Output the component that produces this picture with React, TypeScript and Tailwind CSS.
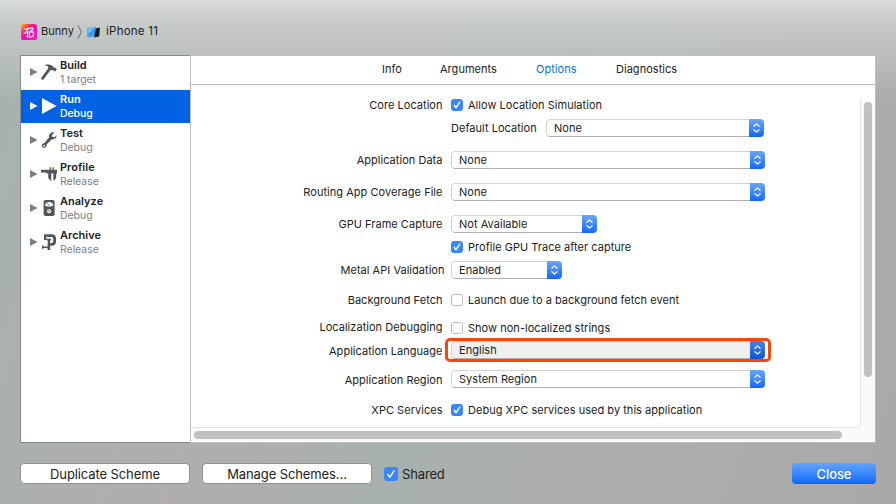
import React from "react";

const FONT = "font-[Inter,'Liberation_Sans',sans-serif]";

function Check({ on, large }: { on: boolean; large?: boolean }) {
  const size = large ? "size-[14px]" : "size-[12px]";
  return on ? (
    <span className={`${size} shrink-0 rounded-[3px] bg-[#3a86fb]`}>
      <svg viewBox="0 0 12 12" className="block size-full" fill="none" stroke="#fff" strokeWidth={large ? 1.2 : 1.5} strokeLinecap="round" strokeLinejoin="round">
        <path d="M3.3 6.4 5.1 8.7 8.7 3.2" />
      </svg>
    </span>
  ) : (
    <span className={`${size} shrink-0 rounded-[3px] border border-[#b9b9b9] bg-white`} />
  );
}

function Select({ value, width, active }: { value: string; width: string; active?: boolean }) {
  return (
    <div className={`flex h-[18px] ${width} shrink-0 overflow-hidden rounded-[4px]`}>
      <div className={`flex flex-1 items-center rounded-l-[4px] border border-r-0 border-[#d2d2d2] border-b-[#b0b0b0] pl-[7px] ${active ? "bg-[#efefef]" : "bg-white"}`}>
        {value}
      </div>
      <div className={`w-[15px] bg-linear-to-b ${active ? "from-[#3f84ee] to-[#0455d8]" : "from-[#68a6fc] to-[#0a66fc]"}`}>
        <svg viewBox="0 0 15 18" className="block h-[18px] w-[15px]" fill="none" stroke="#fff" strokeWidth="1.2" strokeLinecap="round" strokeLinejoin="round">
          <path d="M4.9 7.3 7.5 4.9 10.1 7.3M4.9 10.7 7.5 13.1 10.1 10.7" />
        </svg>
      </div>
    </div>
  );
}

function Row({ label, gap, shift = "", children }: { label: string; gap: string; shift?: string; children: React.ReactNode }) {
  return (
    <div className={`flex h-[18px] items-center ${gap}`}>
      <div className="mr-[8.5px] flex w-[251.5px] shrink-0 justify-end">
        <span className={shift}>{label}</span>
      </div>
      {children}
    </div>
  );
}

function Option({ on, text }: { on: boolean; text: string }) {
  return (
    <div className="flex items-center gap-[5px]">
      <Check on={on} />
      <span>{text}</span>
    </div>
  );
}

const hammer = (
  <svg viewBox="0 0 16 16" className="size-4" fill="none" stroke="#555">
    <path d="M1.6 14.4 8.8 4.6" strokeWidth="2.7" strokeLinecap="round" />
    <path d="M4.2.8C7 0 9.8.4 12 2.2L13.4 4 14.4 3.8 15.8 5.2 14.2 7.6 12.6 6.8 12.2 5.8 10.4 6.4 7.4 4.2C7.6 2.6 6.4 1.6 4.2 1.6Z" fill="#555" stroke="none" />
  </svg>
);
const play = (
  <svg viewBox="0 0 16 16" className="size-4" fill="#fff">
    <path d="M1 0 15.6 8 1 16Z" />
  </svg>
);
const wrench = (
  <svg viewBox="0 0 16 16" className="size-4" fill="#555">
    <path d="M13.4.4 10.9 3.1 11.4 5 13.4 5.3 15.5 3.2C15.9 6 13.8 7.9 10.6 7.4L5.6 12.6C6 14.4 4.6 15.8 3 15.8 1.2 15.8.3 14.2 1 12.8 1.4 11.8 2.4 11.2 3.4 11L8 5.6C7.4 2.6 9.8-.2 13.4.4ZM3.1 13a.8.8 0 1 0 .01 0Z" fillRule="evenodd" />
  </svg>
);
const caliper = (
  <svg viewBox="0 0 16 16" className="size-4" fill="#555">
    <path d="M0 3.8H8.6V.6L9.9 1.8V3.8H11.4V1.8L12.7.6V3.8H16V7.4H15.2V11.6L13.4 14.4H12.4V7.6H10.2V14.4H9L7.2 11.6V7.4H5.6L5 6.6H0Z" />
  </svg>
);
const meter = (
  <svg viewBox="0 0 16 16" className="size-4">
    <rect x="2.6" y="0" width="11" height="16" rx="1.8" fill="#555" />
    <path d="M3.8 5.6C4.6 2.8 6.2 2 8.1 2S11.6 2.8 12.4 5.6L9.6 6.4H6.6Z" fill="#fff" />
    <path d="M8 5.8 6.5 3.4" stroke="#555" strokeWidth=".8" />
    <circle cx="8.1" cy="11.2" r="2" fill="#fff" />
    <path d="M7.2 10.4 9 12" stroke="#555" strokeWidth=".8" />
  </svg>
);
const clamp = (
  <svg viewBox="0 0 16 16" className="size-4" fill="none" stroke="#555">
    <path d="M5.4 1.6H10.4Q13.6 1.6 13.6 4.6V7.4Q13.6 10.4 10.4 10.4H9.2" strokeWidth="2.8" />
    <path d="M3 .2H5.4V6H3ZM6.6 8.4H9.2V16H6.6ZM5.6 4.8H10V6.4H9V9H6.8V6.4H5.6Z" fill="#555" stroke="none" />
    <path d="M1 13.2H7M1.7 11.6V14.8" strokeWidth="1.5" />
  </svg>
);

const schemes = [
  { name: "Build", sub: "1 target", icon: hammer },
  { name: "Run", sub: "Debug", icon: play, selected: true },
  { name: "Test", sub: "Debug", icon: wrench },
  { name: "Profile", sub: "Release", icon: caliper },
  { name: "Analyze", sub: "Debug", icon: meter },
  { name: "Archive", sub: "Release", icon: clamp },
];

function Sidebar() {
  return (
    <div className="w-[170px] shrink-0 border border-r-0 border-[#858a8a] bg-white">
      {schemes.map((s) => (
        <div key={s.name} className={`flex h-[34px] items-start ${s.selected ? "bg-[#0162e3] bg-clip-content pb-px text-white" : "text-[#222]"}`}>
          <svg viewBox="0 0 8 8" className="mt-[12px] ml-[9px] size-[8px] shrink-0" fill={s.selected ? "#fff" : "#7d7d7d"}>
            <path d="M0 0 7.6 4 0 8Z" />
          </svg>
          <div className="mt-[8px] ml-[3px] shrink-0">{s.icon}</div>
          <div className="ml-[3px] pt-[2px]">
            <div className="text-[11px] leading-[14px] font-semibold tracking-[0.02px]">{s.name}</div>
            <div className={`pt-px text-[10.5px] leading-[14px] ${s.selected ? "font-medium tracking-[-0.1px]" : "tracking-[-0.05px] text-[#808080]"}`}>{s.sub}</div>
          </div>
        </div>
      ))}
    </div>
  );
}

function Tabs() {
  return (
    <div className="flex h-[29px] items-center border-b border-[#bdbdbd] pb-[2px] pl-[191px]">
      <span className="w-[58px]">Info</span>
      <span className="w-[96px]">Arguments</span>
      <span className="w-[80px] text-[#0a6fde]">Options</span>
      <span>Diagnostics</span>
    </div>
  );
}

function Form() {
  return (
    <div className="flex min-w-0 flex-1 flex-col">
      <Row label="Core Location" gap="mt-[11px]"><Option on text="Allow Location Simulation" /></Row>
      <Row label="" gap="mt-[5px]">
        <span className="w-[95px] shrink-0">Default Location</span>
        <Select value="None" width="w-[218px]" />
      </Row>
      <Row label="Application Data" gap="mt-[14px]"><Select value="None" width="w-[314px]" /></Row>
      <Row label="Routing App Coverage File" gap="mt-[14px]"><Select value="None" width="w-[314px]" /></Row>
      <Row label="GPU Frame Capture" gap="mt-[14px]"><Select value="Not Available" width="w-[146px]" /></Row>
      <Row label="" gap="mt-[5px]"><Option on text="Profile GPU Trace after capture" /></Row>
      <Row label="Metal API Validation" gap="mt-[5px]" shift="-mr-[2px]"><Select value="Enabled" width="w-[111px]" /></Row>
      <Row label="Background Fetch" gap="mt-[12px]"><Option on={false} text="Launch due to a background fetch event" /></Row>
      <Row label="Localization Debugging" gap="mt-[10px]" shift="pb-[2px]"><Option on={false} text="Show non-localized strings" /></Row>
      <Row label="Application Language" gap="mt-[4px]" shift="pt-[2px]">
        <div className="relative">
          <Select value="English" width="w-[314px]" active />
          <div className="absolute -top-[3px] -right-[6px] -bottom-[3px] -left-[6px] rounded-[5px] border-[3px] border-[#fb4509]" />
        </div>
      </Row>
      <Row label="Application Region" gap="mt-[11px]" shift="pt-[2px]"><Select value="System Region" width="w-[314px]" /></Row>
      <Row label="XPC Services" gap="mt-[13px]"><Option on text="Debug XPC services used by this application" /></Row>
    </div>
  );
}

function PushButton({ text, look }: { text: string; look: string }) {
  return <button className={`flex h-[21px] items-center justify-center rounded-[4px] text-[13px] tracking-[-0.1px] ${look}`}>{text}</button>;
}

export default function App() {
  return (
    <div className={`flex h-[504px] w-[896px] flex-col overflow-hidden bg-[linear-gradient(180deg,rgba(216,219,215,1)_0px,rgba(205,208,208,0.8)_25px,rgba(175,178,178,0)_100px),linear-gradient(110deg,#a6b3af_0%,#aab1ae_12%,#b1aead_32%,#a8b1ad_52%,#adadad_72%,#a9a9a9_100%)] px-5 text-[11px] leading-[14px] tracking-[0.03px] text-[#222] ${FONT}`}>
      <header className="flex h-[55px] shrink-0 items-center pt-[8px]">
        <svg viewBox="0 0 16 16" className="ml-[1px] size-4">
          <defs>
            <linearGradient id="bunny" x1="0" y1="0" x2="1" y2="1">
              <stop offset="0" stopColor="#ffc000" />
              <stop offset=".28" stopColor="#ff3b55" />
              <stop offset=".5" stopColor="#f605bd" />
              <stop offset="1" stopColor="#ff22b5" />
            </linearGradient>
          </defs>
          <rect width="16" height="16" rx="2.6" fill="url(#bunny)" />
          <path d="M3.4 5.2 7.6 4.4 5 8.2M3.2 9.6 6.8 7.6 6.2 13M8.6 4.4 11.2 3.6 12 5.2 8.8 7.8M8.4 8.2 12.2 7.8 12.6 10 11.6 12.6 8 13.2 8.6 8.2" fill="none" stroke="#fff" strokeWidth="1.1" strokeLinecap="round" strokeLinejoin="round" />
        </svg>
        <span className="ml-[4px] w-[36px] pb-[2px] text-[11px]">Bunny</span>
        <svg viewBox="0 0 6 14" className="h-[14px] w-[6px]" fill="none" stroke="#666">
          <path d="M1 .5 4.5 7 1 13.5" />
        </svg>
        <svg viewBox="0 0 15 14" className="ml-[3px] h-[14px] w-[15px]">
          <path d="M1.2 3 10 1.6 10.6 11 2.4 12.6 1.2 11.6Z" fill="#3c9df2" />
          <path d="M1.2 3 10 1.6 6.4 7 1.4 8Z" fill="#67bdfa" />
          <path d="M3.6 9.4 8.6 3.8" stroke="#237bd0" strokeWidth="1" />
          <path d="M10 3.2 14 2.4 13.2 11.4 8.4 12.6 8.4 10.4Z" fill="#141c26" />
        </svg>
        <span className="ml-[5px] pb-[2px] text-[11.5px] tracking-[0.25px]">iPhone 11</span>
      </header>
      <main className="flex h-[388px] w-[856px] shrink-0">
        <Sidebar />
        <section className="flex min-w-0 flex-1 flex-col border border-[#bdbdbd] bg-white">
          <Tabs />
          <div className="flex min-h-0 flex-1">
            <Form />
            <div className="mt-[14px] flex w-[15px] shrink-0 justify-center border-l border-[#e4e4e4] bg-[#fafafa] pt-[3px]">
              <div className="h-[275px] w-[8px] rounded-full bg-[#c1c1c1]" />
            </div>
          </div>
          <div className="flex h-[15px] shrink-0 bg-[#fafafa]">
            <div className="flex h-[15px] w-[669px] items-center border-t border-[#e4e4e4] pl-[3px]">
              <div className="h-[8px] w-[648px] rounded-full bg-[#c1c1c1]" />
            </div>
          </div>
        </section>
      </main>
      <footer className="flex items-center pt-[20px]">
        <PushButton text="Duplicate Scheme" look="w-[170px] border border-[#929292] bg-white" />
        <PushButton text="Manage Schemes..." look="ml-[12px] w-[170px] border border-[#929292] bg-white" />
        <div className="ml-[12px] flex items-center gap-[4px] pt-[1px] text-[13px] tracking-[-0.15px]">
          <Check on large />
          <span>Shared</span>
        </div>
        <PushButton text="Close" look="ml-auto w-[84px] bg-linear-to-b from-[#62a3fc] to-[#0867fb] font-medium text-white" />
      </footer>
    </div>
  );
}
